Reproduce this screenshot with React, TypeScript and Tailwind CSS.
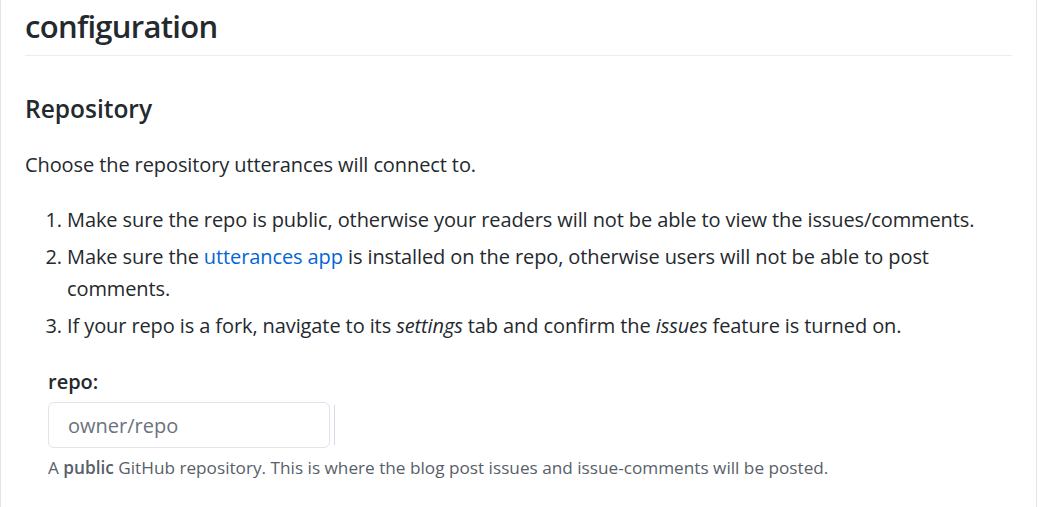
export default function App() {
  return (
    <div className="min-h-screen bg-white font-['Open_Sans',sans-serif] text-[#24292e]">
      <div className="mr-[1px] min-h-[507px] border-x border-[#e1e4e8] px-6">
        <h1 className="border-b border-[#eaecef] pb-[9px] pt-[7px] text-[31px] font-semibold leading-[39px] tracking-[-0.7px]">
          configuration
        </h1>

        <h2 className="mt-[38px] text-[24.5px] font-semibold leading-[30px]">Repository</h2>

        <div className="tracking-[-0.1px]">
          <p className="mt-[25px] text-[20px] leading-[32px]">
            Choose the repository utterances will connect to.
          </p>

          <ol className="mt-[23px] list-decimal space-y-[5px] pl-[42px] text-[20px] leading-[32px]">
            <li>
              Make sure the repo is public, otherwise your readers will not be able to view the
              issues/comments.
            </li>
            <li>
              Make sure the <a href="#" className="text-[#0366d6]">utterances app</a> is installed
              on the repo, otherwise users will not be able to post comments.
            </li>
            <li>
              If your repo is a fork, navigate to its <em>settings</em> tab and confirm the{" "}
              <em>issues</em> feature is turned on.
            </li>
          </ol>
        </div>

        <fieldset className="mt-6 pl-[23px]">
          <label htmlFor="repo" className="block text-[20px] font-semibold leading-[32px]">
            repo:
          </label>
          <div className="mt-1 flex items-center gap-1">
            <input
              id="repo"
              type="text"
              placeholder="owner/repo"
              className="h-[46px] w-[282px] rounded-md border border-[#e1e4e8] px-[19px] text-[20px] outline-none placeholder:text-[#6a737d]"
            />
            <span className="h-[40px] w-px bg-[#d4dce8]" />
          </div>
          <p className="mt-[7px] text-[17.2px] leading-[26px] text-[#586069]">
            A <strong className="font-semibold">public</strong> GitHub repository. This is where the
            blog post issues and issue-comments will be posted.
          </p>
        </fieldset>
      </div>
    </div>
  );
}
